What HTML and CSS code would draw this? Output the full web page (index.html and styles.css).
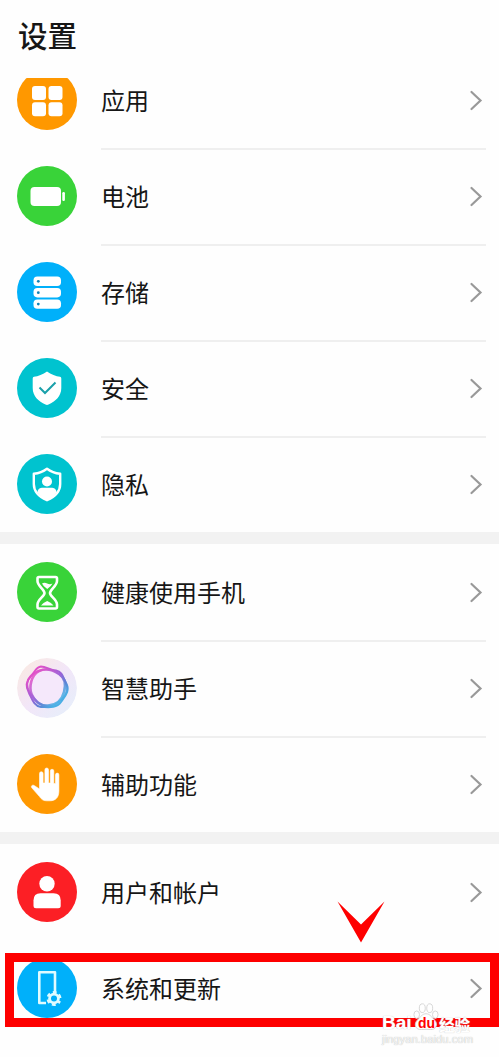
FILE: index.html
```html
<!DOCTYPE html>
<html lang="zh-CN">
<head>
    <meta charset="UTF-8">
    <meta name="viewport" content="width=device-width, initial-scale=1.0">
    <title>设置</title>
    <link rel="stylesheet" href="styles.css">
</head>
<body>
    <header class="header">
        <h1>设置</h1>
    </header>

    <main class="content">
        <div class="list">
            <section class="group">
                <div class="row">
                    <svg class="icon orange" viewBox="0 0 60 60">
                        <g fill="#fff">
                            <rect x="15" y="16" width="14" height="14" rx="3"/>
                            <rect x="31.5" y="16" width="14" height="14" rx="3"/>
                            <rect x="15" y="32.3" width="14" height="14" rx="3"/>
                            <rect x="31.5" y="32.3" width="14" height="14" rx="3"/>
                        </g>
                    </svg>
                    <span class="label">应用</span>
                    <svg class="chevron" viewBox="0 0 12 20"><path d="M1.5 2 10.5 10.5 1.5 19"/></svg>
                </div>
                <div class="row">
                    <svg class="icon green" viewBox="0 0 60 60">
                        <rect x="13.5" y="21" width="30.5" height="19" rx="4" fill="#fff"/>
                        <rect x="45.3" y="26" width="2.6" height="9" rx="1.2" fill="#fff"/>
                    </svg>
                    <span class="label">电池</span>
                    <svg class="chevron" viewBox="0 0 12 20"><path d="M1.5 2 10.5 10.5 1.5 19"/></svg>
                </div>
                <div class="row">
                    <svg class="icon blue" viewBox="0 0 60 60">
                        <g fill="#fff">
                            <rect x="16.5" y="14.6" width="27.5" height="9.4" rx="3.8"/>
                            <rect x="16.5" y="26" width="27.5" height="9.4" rx="3.8"/>
                            <rect x="16.5" y="37.4" width="27.5" height="9.4" rx="3.8"/>
                        </g>
                        <g fill="#0d83b8">
                            <circle cx="21.3" cy="19.3" r="1.4"/>
                            <circle cx="21.3" cy="30.7" r="1.4"/>
                            <circle cx="21.3" cy="42.1" r="1.4"/>
                        </g>
                    </svg>
                    <span class="label">存储</span>
                    <svg class="chevron" viewBox="0 0 12 20"><path d="M1.5 2 10.5 10.5 1.5 19"/></svg>
                </div>
                <div class="row">
                    <svg class="icon teal" viewBox="0 0 60 60">
                        <path d="M30 13.5C34 16.5 39 18.3 43 18.8Q44.3 19 44.3 20.5V30C44.3 38 38.5 43.5 31.5 46.6Q30 47.3 28.5 46.6C21.5 43.5 15.7 38 15.7 30V20.5Q15.7 19 17 18.8C21 18.3 26 16.5 30 13.5Z" fill="#fff"/>
                        <path d="M22.5 29.5 28 35 38.5 24.5" fill="none" stroke="#1aa0aa" stroke-width="2"/>
                    </svg>
                    <span class="label">安全</span>
                    <svg class="chevron" viewBox="0 0 12 20"><path d="M1.5 2 10.5 10.5 1.5 19"/></svg>
                </div>
                <div class="row">
                    <svg class="icon teal" viewBox="0 0 60 60">
                        <path d="M30 14.7C34 17.7 39 19.3 43.2 19.8V30C43.2 38 37 43.2 30 46.2C23 43.2 16.8 38 16.8 30V19.8C21 19.3 26 17.7 30 14.7Z" fill="none" stroke="#fff" stroke-width="2.4" stroke-linejoin="round"/>
                        <circle cx="30" cy="27.5" r="5" fill="#fff"/>
                        <path d="M20.5 38.5C20.5 35 23 33.7 26 33.7H34C37 33.7 39.5 35 39.5 38.5C37 42 34 44 30 46C26 44 23 42 20.5 38.5Z" fill="#fff"/>
                    </svg>
                    <span class="label">隐私</span>
                    <svg class="chevron" viewBox="0 0 12 20"><path d="M1.5 2 10.5 10.5 1.5 19"/></svg>
                </div>
            </section>

            <section class="group">
                <div class="row">
                    <svg class="icon green" viewBox="0 0 60 60">
                        <path d="M22 15H38.500Q40 15 40 16.500V19C40 24 33 27.500 33 31S40 37.500 40 42.500V45Q40 46.500 38.500 46.500H22Q20.500 46.500 20.500 45V42.500C20.500 37.500 27.500 34.500 27.500 31S20.500 24 20.500 19V16.500Q20.500 15 22 15Z" fill="none" stroke="#fff" stroke-width="2.6"/>
                        <path d="M25 21.500Q27.500 20 30.200 21.500T35.500 21.500Q34.500 24 30.200 27Q26 24 25 21.500Z" fill="#fff"/>
                        <path d="M24 43.500Q26 40.500 30.200 39Q34.500 40.500 36.500 43.500Z" fill="#fff"/>
                    </svg>
                    <span class="label">健康使用手机</span>
                    <svg class="chevron" viewBox="0 0 12 20"><path d="M1.5 2 10.5 10.5 1.5 19"/></svg>
                </div>
                <div class="row">
                    <svg class="icon" viewBox="0 0 60 60">
                        <defs>
                            <linearGradient id="halo" x1="0" y1="0" x2="1" y2="1">
                                <stop offset="0" stop-color="#fbeadf"/>
                                <stop offset=".5" stop-color="#f2e6f8"/>
                                <stop offset="1" stop-color="#e4f0fb"/>
                            </linearGradient>
                            <linearGradient id="ring" x1=".2" y1=".1" x2=".85" y2=".8">
                                <stop offset="0" stop-color="#e050c8"/>
                                <stop offset=".5" stop-color="#9a62d8"/>
                                <stop offset=".75" stop-color="#5b83d5"/>
                                <stop offset="1" stop-color="#4aaee4"/>
                            </linearGradient>
                        </defs>
                        <circle cx="30" cy="30" r="30" fill="url(#halo)"/>
                        <circle cx="30.5" cy="30" r="17.5" fill="#f5e8fb"/>
                        <g fill="none" stroke="url(#ring)" stroke-linejoin="round">
                            <path d="M24 8.500C29 8.500 33 12 39 12.500C46 14 46 20 49.500 26C53 33 48 38 44 44C39 51 30 49 24 49C17 48 15 41 12 35C8 28 9 23 14 18C18 14 19 9 24 8.500Z" stroke-width="2"/>
                            <path d="M22 13C29 10 36 12 42 16C48 20 49 27 47 34C45 42 39 47 31 47.500C23 48 17 43 14.500 36C12 29 14 17 22 13Z" stroke-width="2.600" opacity=".85"/>
                            <path d="M26 11.500C34 10 42 14 47 21C52 29 50 37 43 43C36 50 26 50 20 43.500C14 37 8 30 11 22C14 16 20 13 26 11.500Z" stroke-width="2" opacity=".8"/>
                        </g>
                    </svg>
                    <span class="label">智慧助手</span>
                    <svg class="chevron" viewBox="0 0 12 20"><path d="M1.5 2 10.5 10.5 1.5 19"/></svg>
                </div>
                <div class="row">
                    <svg class="icon orange" viewBox="0 0 60 60">
                        <path d="M22.5 35V19.5a1.7 1.7 0 0 1 3.6 0V29H27.9V15.8a1.8 1.8 0 0 1 3.6 0V29H33.3V17a1.75 1.75 0 0 1 3.5 0V29.5H38.5V20.8a1.7 1.7 0 0 1 3.4 0V37C41.9 43.5 38.5 46.8 33 46.8H29.5C26 46.8 24.3 45.2 22.5 42.6L14.8 33.8C13.5 32 15.5 30.3 17.5 31.7Z" fill="#fff" stroke="#fff" stroke-width=".6" stroke-linejoin="round"/>
                    </svg>
                    <span class="label">辅助功能</span>
                    <svg class="chevron" viewBox="0 0 12 20"><path d="M1.5 2 10.5 10.5 1.5 19"/></svg>
                </div>
            </section>

            <section class="group plain">
                <div class="row">
                    <svg class="icon red" viewBox="0 0 60 60">
                        <circle cx="30" cy="21.7" r="7.7" fill="#fff"/>
                        <path d="M16.5 43.8V38.5Q16.5 31.3 23.5 31.3H36.5Q43.7 31.3 43.7 38.5V43.8Q43.7 46.3 41.2 46.3H19Q16.5 46.3 16.5 43.8Z" fill="#fff"/>
                    </svg>
                    <span class="label">用户和帐户</span>
                    <svg class="chevron" viewBox="0 0 12 20"><path d="M1.5 2 10.5 10.5 1.5 19"/></svg>
                </div>
                <div class="row">
                    <svg class="icon blue" viewBox="0 0 60 60">
                        <path d="M29 45H22.3V14.2H38V34" fill="none" stroke="#e0fbff" stroke-width="2.6" stroke-linejoin="round"/>
                        <circle cx="37" cy="40.5" r="5.8" fill="#e0fbff"/>
                        <circle cx="37" cy="40.5" r="6.2" fill="none" stroke="#e0fbff" stroke-width="2.6" stroke-dasharray="3.6 2.893" stroke-dashoffset="1.8" transform="rotate(30 37 40.5)"/>
                        <circle cx="37" cy="40.5" r="3" fill="#00aef8"/>
                    </svg>
                    <span class="label">系统和更新</span>
                    <svg class="chevron" viewBox="0 0 12 20"><path d="M1.5 2 10.5 10.5 1.5 19"/></svg>
                </div>
            </section>
        </div>
    </main>

    <!-- annotations over the list -->
    <svg class="arrow" viewBox="0 0 48 42"><path d="M.5.5 24 23.5 47.5.5 24 41.5Z"/></svg>
    <div class="highlight"></div>

    <div class="watermark">
        <div class="brand">
            <span class="bai">Bai</span>
            <span class="paw">
                <svg viewBox="0 0 28 30">
                    <g fill="#fff" stroke="#d4d4d4" stroke-width="1">
                        <ellipse cx="4" cy="12.5" rx="3" ry="4"/>
                        <ellipse cx="10" cy="5.5" rx="3.2" ry="4.7"/>
                        <ellipse cx="18" cy="5.5" rx="3.2" ry="4.7"/>
                        <ellipse cx="24" cy="12.5" rx="3" ry="4"/>
                        <path d="M14 11.5C18 11.5 20 15 23 18C28 23 24 29 19 28.5Q14 28 9 28.5C3 29 0 23 5 18C8 15 10 11.5 14 11.5Z"/>
                    </g>
                </svg>
                <span class="du">du</span>
            </span>
            <span class="jy">经验</span>
        </div>
        <div class="url">jingyan.baidu.com</div>
    </div>
</body>
</html>
```

FILE: styles.css
```css
* {
    box-sizing: border-box;
}

body {
    position: relative;
    margin: 0;
    height: 1057px;
    overflow: hidden;
    background: #fefefe;
    color: #161616;
    font-family: "Noto Sans CJK SC", "Noto Sans", sans-serif;
}

.header {
    height: 78px;
    padding: 12px 18px 0;
}

.header h1 {
    margin: 0;
    font-size: 29.5px;
    line-height: 44px;
    font-weight: 500;
}

/* the list is scrolled a little under the header */
.content {
    height: 979px;
    overflow: hidden;
}

.list {
    margin-top: -26px;
}

.group + .group {
    border-top: 12px solid #f2f2f2;
}

.row {
    display: grid;
    grid-template-columns: 60px 1fr 12px;
    column-gap: 24px;
    align-items: center;
    height: 96px;
    padding: 0 17px;
    background: linear-gradient(#efefef, #efefef) 101px 0 / 385px 2px no-repeat;
}

.row:first-child,
.plain .row {
    background: none;
}

.icon {
    display: block;
    width: 60px;
    height: 60px;
    border-radius: 50%;
}

.orange { background: #ff9800; }
.green { background: #39d339; }
.blue { background: #00b0fa; }
.teal { background: #00c3cf; }
.red { background: #fc1f25; }

.label {
    font-size: 24px;
    line-height: 36px;
    white-space: nowrap;
}

.chevron {
    width: 12px;
    height: 20px;
    overflow: visible;
    fill: none;
    stroke: #999;
    stroke-width: 2.2;
    stroke-linecap: round;
}

.arrow {
    position: absolute;
    left: 336.5px;
    top: 901px;
    width: 48px;
    height: 42px;
    fill: #fe0000;
}

.highlight {
    position: absolute;
    left: 5px;
    top: 953px;
    width: 494px;
    height: 74px;
    border: 9px solid #fe0000;
}

.watermark {
    position: absolute;
    left: 382px;
    top: 1003px;
    width: 92px;
    color: #fff;
    font-family: "Liberation Sans", sans-serif;
}

.brand {
    display: grid;
    grid-template-columns: 31px 26px 32px;
    align-items: end;
    height: 29px;
    font-weight: bold;
    text-shadow: 0 0 1px #bbb;
}

.bai {
    font-size: 19px;
    line-height: 18px;
}

.paw {
    position: relative;
    height: 29px;
}

.paw svg {
    display: block;
    width: 26px;
    height: 28px;
}

.du {
    position: absolute;
    left: 5px;
    top: 12px;
    color: #f00;
    font-size: 14px;
    line-height: 16px;
    text-shadow: none;
}

.jy {
    font-family: "Noto Sans CJK SC", sans-serif;
    font-size: 15.5px;
    line-height: 16px;
}

.url {
    margin-top: 1px;
    color: #f6f6f6;
    font-size: 11.3px;
    line-height: 13px;
    text-shadow: 0 0 1px #aaa;
    white-space: nowrap;
}
```
